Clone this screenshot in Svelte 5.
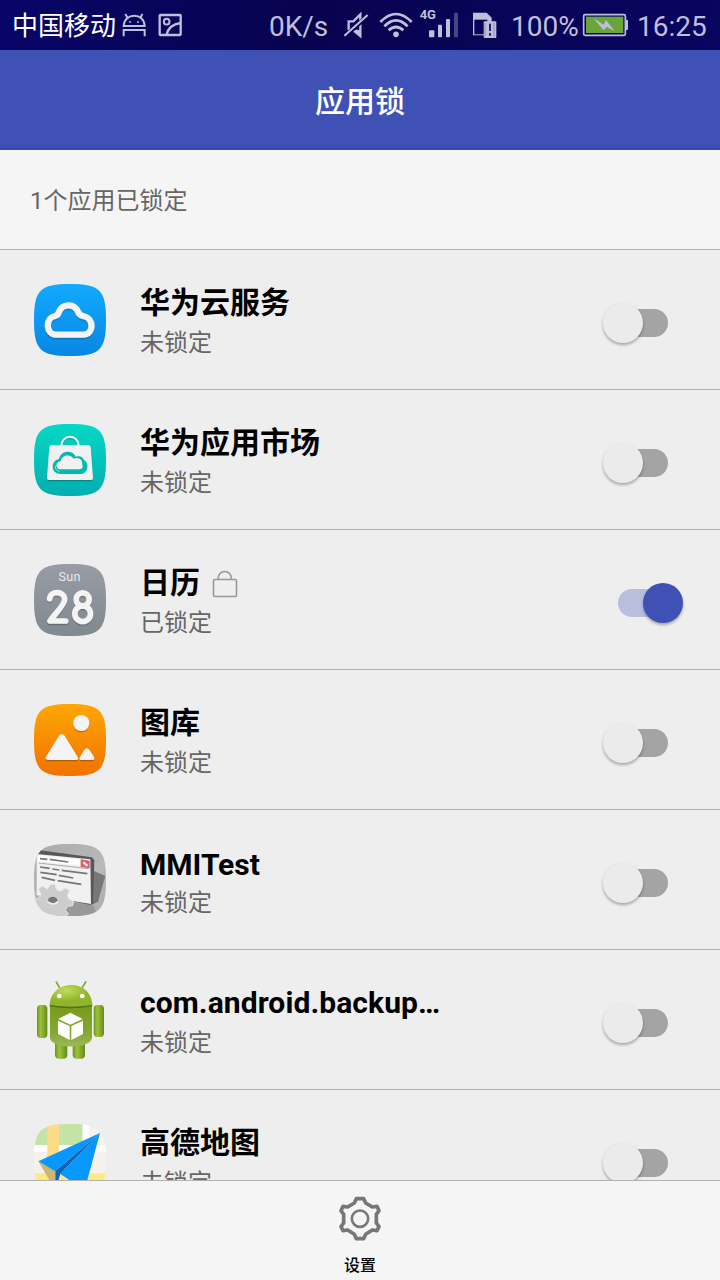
<script>
  const apps = [
    { id: 'cloud', name: '华为云服务', locked: false },
    { id: 'market', name: '华为应用市场', locked: false },
    { id: 'calendar', name: '日历', locked: true },
    { id: 'gallery', name: '图库', locked: false },
    { id: 'mmi', name: 'MMITest', locked: false },
    { id: 'backup', name: 'com.android.backup…', locked: false },
    { id: 'map', name: '高德地图', locked: false }
  ];
  const squircle = 'M150 42C240 42 258 60 258 150S240 258 150 258S42 240 42 150S60 42 150 42Z';
</script>

<div class="screen">
  <div class="status">
    <span class="carrier">中国移动</span>
    <svg class="droid" width="30" height="50" viewBox="357 0 90 150" fill="none" stroke="#c0bfdb" stroke-width="6">
      <path d="M371 78C373 37 433 37 434 78ZM383 54L376 42M421 54L427 42M371 109V90H434V109" />
      <circle cx="390" cy="66" r="2" fill="#c0bfdb" stroke-width="2" /><circle cx="414" cy="66" r="2" fill="#c0bfdb" stroke-width="2" />
    </svg>
    <svg class="pic" width="30" height="50" viewBox="465 0 90 150" fill="none" stroke="#c0bfdb" stroke-width="7">
      <rect x="479" y="45" width="63" height="60" rx="2" /><circle cx="500" cy="65" r="8.5" stroke-width="6" /><path d="M499 106C503 88 517 72 542 69" />
    </svg>
    <span class="speed">0K/s</span>
    <svg class="mute" width="30" height="50" viewBox="243 0 90 150" fill="none" stroke="#c0bfdb">
      <path d="M266 91V64H280L301 43V108L281 92" stroke-width="7" />
      <path d="M283 88L301 91V110L283 94Z" fill="#c0bfdb" stroke="none" />
      <path d="M254 110L322 48" stroke="#080454" stroke-width="13" /><path d="M253 107L323 45" stroke-width="6" />
    </svg>
    <svg class="wifi" width="36" height="50" viewBox="354 0 108 150" fill="none" stroke="#c0bfdb" stroke-width="8">
      <path d="M361 66Q408 18 455 66M373 79Q408 43 443 79M386 91Q408 71 430 91" /><circle cx="408" cy="103" r="8.5" fill="#c0bfdb" stroke="none" />
    </svg>
    <svg class="signal" width="42" height="50" viewBox="477 0 126 150" fill="#c0bfdb">
      <text x="479" y="56" font-family="Roboto" font-size="39" font-weight="700">4G</text>
      <rect x="507" y="91" width="16" height="21" rx="3" /><rect x="534" y="74" width="12" height="38" rx="3" /><rect x="558" y="57" width="12" height="55" rx="3" /><rect x="582" y="38" width="12" height="74" rx="3" opacity=".35" />
    </svg>
    <svg class="sim" width="30" height="50" viewBox="30 0 90 150">
      <path d="M39 38H80L95 53V106H39Z" fill="#c0bfdb" /><path d="M43 59H82V103H43Z" fill="#080457" /><rect x="71" y="64" width="38" height="50" rx="3" fill="#c0bfdb" /><path d="M75 69V110M102 69V110" stroke="#777397" stroke-width="2" /><path d="M90 71V93M90 99V107" stroke="#080457" stroke-width="5" />
    </svg>
    <span class="percent">100%</span>
    <svg class="battery" width="48" height="50" viewBox="366 0 144 150">
      <rect x="371" y="44" width="125" height="62" rx="4" fill="#080457" stroke="#c0bfdb" stroke-width="5" /><path d="M496 59H501Q504 59 504 62V87Q504 90 501 90H496Z" fill="#c0bfdb" /><rect x="378" y="50" width="112" height="49" fill="#6aa53b" /><path d="M401 55L431 74L438 60L464 94L440 80L431 91Z" fill="#c0bfdb" />
    </svg>
    <span class="clock">16:25</span>
  </div>
  <header>应用锁</header>
  <div class="summary">1个应用已锁定</div>
  <main>
    {#each apps as app}
      <div class="row">
        <svg class="icon" viewBox="30 30 240 240">
          <defs>
            <linearGradient id="g-cloud" x2="0" y2="1"><stop stop-color="#11aafe" /><stop offset="1" stop-color="#0787e4" /></linearGradient>
            <linearGradient id="g-market" x2="0" y2="1"><stop stop-color="#06d8c5" /><stop offset="1" stop-color="#01aeb0" /></linearGradient>
            <linearGradient id="g-calendar" x2="0" y2="1"><stop stop-color="#989da5" /><stop offset="1" stop-color="#808890" /></linearGradient>
            <linearGradient id="g-gallery" x2="0" y2="1"><stop stop-color="#ffa704" /><stop offset="1" stop-color="#f07200" /></linearGradient>
            <linearGradient id="g-mmi" x2="1" y2="1"><stop stop-color="#a8a8a8" /><stop offset=".6" stop-color="#b9b9b9" /><stop offset="1" stop-color="#aaa" /></linearGradient>
            <linearGradient id="limb"><stop stop-color="#6f941c" /><stop offset=".35" stop-color="#9cc33a" /><stop offset="1" stop-color="#648b19" /></linearGradient>
            <linearGradient id="torso" x2="0" y2="1"><stop stop-color="#76991d" /><stop offset=".7" stop-color="#86a934" /><stop offset="1" stop-color="#a0b75b" /></linearGradient>
            <radialGradient id="head" cx=".4" cy=".25"><stop stop-color="#bfdd58" /><stop offset="1" stop-color="#8fb52d" /></radialGradient>
            <clipPath id="clip"><path d={squircle} /></clipPath>
            <filter id="drop" x="-20%" y="-20%" width="140%" height="150%"><feDropShadow dx="0" dy="4" stdDeviation="2" flood-color="#000" flood-opacity=".25" /></filter>
            <filter id="soft"><feGaussianBlur stdDeviation="2.2" /></filter>
          </defs>
          {#if app.id === 'cloud'}
            <path d={squircle} fill="url(#g-cloud)" />
            <path filter="url(#drop)" d="M110 194C76 194 75 144 105 138Q113 136 116 128C126 99 163 100 173 124Q178 136 189 138C224 144 222 194 190 194Z" fill="none" stroke="#f4f4f6" stroke-width="19" stroke-linejoin="round" />
          {:else if app.id === 'market'}
            <path d={squircle} fill="url(#g-market)" />
            <g filter="url(#drop)">
              <path d="M124 110C124 70 176 70 176 110" fill="none" stroke="#f3f3f3" stroke-width="6" />
              <path d="M94 106H206Q211 106 212 111L219 204Q219 210 213 210H87Q81 210 81 204L88 111Q89 106 94 106Z" fill="#f1f1f1" />
            </g>
            <path d="M122 192C92 192 90 152 117 147C122 120 159 118 167 140C180 136 190 142 191 149C210 158 204 192 182 192Z" fill="#05b9ae" />
            <path d="M121 178C106 178 105 155 122 154C125 133 153 132 160 146C176 140 190 151 186 163C191 169 187 178 180 178Z" fill="#f2f2f2" />
            <path d="M106 168Q105 181 119 184" stroke="#f2f2f2" stroke-width="2" fill="none" />
          {:else if app.id === 'calendar'}
            <path d={squircle} fill="url(#g-calendar)" />
            <text x="149" y="93" text-anchor="middle" font-family="Roboto" font-size="38" fill="#e9e9eb" letter-spacing="1">Sun</text>
            <g filter="url(#drop)" fill="none" stroke="#f4f4f4" stroke-width="17" stroke-linecap="round" stroke-linejoin="round">
              <path d="M89 146C91 121 132 122 134 147C135 165 103 193 90 213H137" />
              <circle cx="188" cy="148" r="19.500" /><circle cx="188" cy="191" r="23.500" />
            </g>
          {:else if app.id === 'gallery'}
            <path d={squircle} fill="url(#g-gallery)" />
            <g filter="url(#drop)" fill="#f4f4f4">
              <circle cx="184" cy="99" r="24" />
              <path d="M79 199L117 137Q125 127 134 137L173 201Q178 210 168 210H86Q72 210 79 199Z" />
              <path d="M178 205L193 179Q201 170 208 179L222 200Q226 210 216 210H180Z" />
            </g>
          {:else if app.id === 'mmi'}
            <g clip-path="url(#clip)">
              <path d="M30 30H270V270H30Z" fill="url(#g-mmi)" />
              <g filter="url(#soft)">
                <path d="M215 120L256 138L234 215L215 225Z" fill="#777" /><path d="M120 215L218 223L235 260H90Z" fill="#999" />
                <path d="M54 60L216 82L223 91L219 221L209 224L53 195Z" fill="#585858" />
                <path d="M50 72L211 88L213 222L50 196Z" fill="#f1f1f1" />
                <path d="M53 76L181 89V104L55 96Z" fill="#fff" />
                <path d="M60 86L82 88M89 88L145 96" stroke="#777" stroke-width="5" />
                <path d="M56 99L206 116" stroke="#aaa" stroke-width="3" />
                <path d="M182 88L209 92V115L182 111Z" fill="#e25d66" /><path d="M190 97L202 107" stroke="#fff" stroke-width="6" />
                <path d="M60 111L89 115M97 117L118 120M125 121L202 131M61 127L110 134M116 136L160 144M65 142L105 151M113 152L184 163" stroke="#777" stroke-width="5" />
                <path d="M91 164L105 163L110 180L122 184L135 174L148 180L142 197L148 208L160 213L158 227L142 229L136 241L146 252L134 260H61L65 243L57 230L42 228V210L58 204L63 192L55 177L68 168L82 178Z" fill="#cdcdcd" stroke="#e5e5e5" stroke-width="3" />
                <ellipse cx="98" cy="211" rx="14" ry="11" fill="#777" /><path d="M82 215Q101 229 114 215" stroke="#eee" stroke-width="5" fill="none" />
              </g>
            </g>
          {:else if app.id === 'backup'}
            <path d="M118 52L109 36M187 52L197 36" stroke="#87a43a" stroke-width="5" stroke-linecap="round" />
            <rect x="105" y="200" width="37" height="66" rx="12" fill="url(#limb)" /><rect x="158" y="200" width="37" height="66" rx="12" fill="url(#limb)" />
            <rect x="51" y="105" width="31" height="99" rx="11" fill="url(#limb)" /><rect x="221" y="105" width="31" height="96" rx="11" fill="url(#limb)" />
            <path d="M90 106H216V203C216 238 90 238 90 203Z" fill="url(#torso)" />
            <path d="M89 105C92 27 213 23 217 105Q153 117 89 105Z" fill="url(#head)" /><path d="M89 107Q153 118 217 107" fill="none" stroke="#567012" stroke-width="4" />
            <circle cx="118" cy="78" r="7" fill="#fff" /><circle cx="187" cy="78" r="7" fill="#fff" />
            <path d="M151 128L188 147L151 164L115 147Z" fill="#fff" /><path d="M114 152L149 168V210L114 192Z" fill="#fff" /><path d="M154 168L189 152V192L154 210Z" fill="#fff" />
          {:else}
            <g clip-path="url(#clip)">
              <path d="M30 30H270V270H30Z" fill="#f5f2ee" /><path d="M42 42H188V105H42Z" fill="#c4e3a6" /><path d="M30 105H270V126H30ZM188 42H207V190H188Z" fill="#fff" /><path d="M82 42H117V210H82Z" fill="#fedc87" /><path d="M42 190H258V258H42Z" fill="#fce982" />
            </g>
            <path d="M55 154L106 182V240Z" fill="#cdb574" />
            <path d="M240 69L55 154L106 184Z" fill="#0797ff" /><path d="M240 69L106 184V240L121 192Z" fill="#0c67b8" /><path d="M240 69L121 192L194 240Z" fill="#0797ff" />
          {/if}
        </svg>
        <div class="copy">
          <div class="title {app.id}">
            <span>{app.name}</span>
            {#if app.locked}
              <svg class="lock" width="26" height="28" viewBox="0 0 26 28" fill="none" stroke="#999" stroke-width="1.6"><rect x="1.5" y="9.5" width="23" height="17" rx="1.5" /><path d="M6 9C6 -1 19.500 -1 19.500 9" /></svg>
            {/if}
          </div>
          <div class="sub">{app.locked ? '已锁定' : '未锁定'}</div>
        </div>
        <div class="switch" class:on={app.locked}><i></i></div>
      </div>
    {/each}
  </main>
  <footer>
    <svg width="48" height="48" viewBox="108 76 144 144" fill="none" stroke="#777" stroke-linejoin="round">
      <path d="M169 87H191L197 100L217 112L231 110L237 123L229 134V160L237 171L231 183L217 181L197 194L191 207H169L163 194L143 181L129 183L123 171L131 160V134L123 123L129 110L143 112L163 100Z" stroke-width="11" />
      <circle cx="180" cy="147" r="24.500" stroke-width="8" />
    </svg>
    <span>设置</span>
  </footer>
</div>

<style>
  :global(body) { margin: 0; }
  .screen { width: 720px; height: 1280px; display: flex; flex-direction: column; overflow: hidden; background: #f5f5f5; font-family: Roboto, "Noto Sans CJK SC", sans-serif; color: #000; }
  .status { height: 50px; flex: none; display: flex; align-items: center; background: linear-gradient(105deg, #080568, #07034f 42%, #090560); color: #c0bfdb; font-size: 28px; line-height: 50px; white-space: nowrap; }
  .status span, .status svg { flex: none; }
  .status span { padding-top: 4px; }
  .status .carrier { width: 107px; padding: 2px 0 0 12px; font-size: 26px; color: #fff; }
  .droid { margin-right: 6px; }
  .pic { margin-right: 84px; }
  .speed { width: 72px; }
  .mute { margin-right: 7px; }
  .wifi { margin-right: 5px; }
  .signal { margin-right: 9px; }
  .sim { margin-right: 11px; }
  .percent { width: 71px; }
  .clock { padding-left: 7px; }
  header { height: 97px; padding-top: 3px; flex: none; background: #3f51b5; color: #fff; font-size: 30px; line-height: 97px; text-align: center; box-shadow: inset 0 -5px 3px -3px #394aa8; font-weight: 500; }
  .summary { height: 95px; flex: none; border-bottom: 1px solid #b2b2b2; padding: 4px 0 0 30px; font-size: 24px; line-height: 95px; color: #666; }
  main { flex: 1; min-height: 0; overflow: hidden; background: #eee; }
  .row { height: 139px; display: flex; border-bottom: 1px solid #b2b2b2; padding-left: 30px; }
  .icon { width: 80px; height: 80px; margin-top: 30px; flex: none; }
  .copy { margin-left: 30px; padding-top: 33px; width: 462px; }
  .title { height: 40px; line-height: 40px; font-size: 30px; font-weight: 700; display: flex; white-space: nowrap; }
  .title.mmi { height: 38px; padding-top: 2px; }
  .title.backup { letter-spacing: .1px; }
  .lock { margin: 7px 0 0 12px; }
  .sub { height: 36px; line-height: 40px; font-size: 24px; color: #666; }
  .switch { width: 82px; height: 40px; margin-top: 53px; display: grid; grid-template: 40px / 82px; }
  .switch::before { content: ""; grid-area: 1 / 1; width: 50px; height: 28px; border-radius: 14px; background: #a4a4a4; align-self: center; margin-left: 16px; }
  .switch i { grid-area: 1 / 1; width: 40px; height: 40px; border-radius: 50%; background: #ebebeb; margin-left: 1px; box-shadow: 0 2px 3px rgba(0, 0, 0, .3); }
  .switch.on::before { background: #b9bedf; }
  .switch.on i { background: #3f51b5; margin-left: 41px; }
  footer { height: 85px; flex: none; border-top: 1px solid #b2b2b2; background: #f5f5f5; display: flex; flex-direction: column; align-items: center; padding-top: 14px; }
  footer span { font-size: 16px; line-height: 24px; margin-top: 11px; font-weight: 500; }
</style>
